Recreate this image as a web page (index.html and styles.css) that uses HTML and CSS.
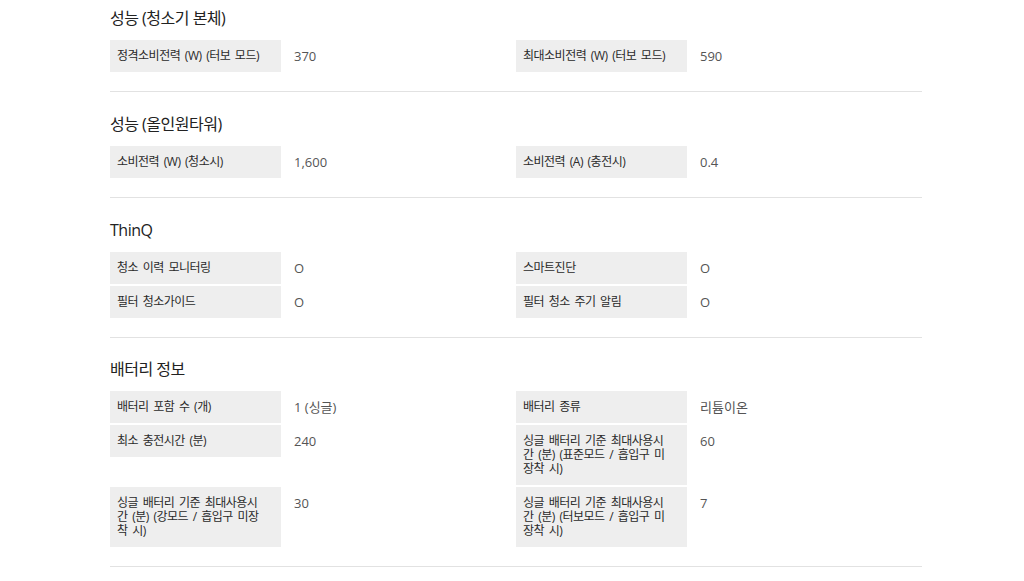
FILE: index.html
```html
<!DOCTYPE html>
<html lang="ko">
<head>
<meta charset="utf-8">
<title>스펙</title>
<link rel="stylesheet" href="styles.css">
</head>
<body>
<div class="specs">
  <section class="spec-group">
    <h3 class="spec-title">성능 (청소기 본체)</h3>
    <div class="spec-grid">
      <div class="spec-item"><div class="spec-label">정격소비전력 (W) (터보 모드)</div><div class="spec-value">370</div></div>
      <div class="spec-item"><div class="spec-label">최대소비전력 (W) (터보 모드)</div><div class="spec-value">590</div></div>
    </div>
  </section>
  <section class="spec-group">
    <h3 class="spec-title">성능 (올인원타워)</h3>
    <div class="spec-grid">
      <div class="spec-item"><div class="spec-label">소비전력 (W) (청소시)</div><div class="spec-value">1,600</div></div>
      <div class="spec-item"><div class="spec-label">소비전력 (A) (충전시)</div><div class="spec-value">0.4</div></div>
    </div>
  </section>
  <section class="spec-group">
    <h3 class="spec-title">ThinQ</h3>
    <div class="spec-grid">
      <div class="spec-item"><div class="spec-label">청소 이력 모니터링</div><div class="spec-value">O</div></div>
      <div class="spec-item"><div class="spec-label">스마트진단</div><div class="spec-value">O</div></div>
      <div class="spec-item"><div class="spec-label">필터 청소가이드</div><div class="spec-value">O</div></div>
      <div class="spec-item"><div class="spec-label">필터 청소 주기 알림</div><div class="spec-value">O</div></div>
    </div>
  </section>
  <section class="spec-group">
    <h3 class="spec-title">배터리 정보</h3>
    <div class="spec-grid">
      <div class="spec-item"><div class="spec-label">배터리 포함 수 (개)</div><div class="spec-value">1 (싱글)</div></div>
      <div class="spec-item"><div class="spec-label">배터리 종류</div><div class="spec-value">리튬이온</div></div>
      <div class="spec-item"><div class="spec-label">최소 충전시간 (분)</div><div class="spec-value">240</div></div>
      <div class="spec-item"><div class="spec-label">싱글 배터리 기준 최대사용시간 (분) (표준모드 / 흡입구 미장착 시)</div><div class="spec-value">60</div></div>
      <div class="spec-item"><div class="spec-label">싱글 배터리 기준 최대사용시간 (분) (강모드 / 흡입구 미장착 시)</div><div class="spec-value">30</div></div>
      <div class="spec-item"><div class="spec-label">싱글 배터리 기준 최대사용시간 (분) (터보모드 / 흡입구 미장착 시)</div><div class="spec-value">7</div></div>
    </div>
  </section>
</div>
</body>
</html>
```

FILE: styles.css
```css
html, body {
  margin: 0;
  padding: 0;
  background: #ffffff;
}

body {
  font-family: "Open Sans", "Noto Sans CJK KR", sans-serif;
  color: #333333;
}

.specs {
  width: 812px;
  margin: 0 0 0 110px;
}

.spec-group {
  padding: 21px 0 19px;
  border-bottom: 1px solid #e2e2e2;
}

.spec-group:first-child {
  padding-top: 7px;
}

.spec-group:last-child {
  padding-top: 20px;
}

.spec-title {
  margin: 0 0 11px;
  font-size: 16px;
  line-height: 22px;
  font-weight: 400;
  letter-spacing: -0.5px;
  color: #222222;
}

.spec-grid {
  display: grid;
  grid-template-columns: 1fr 1fr;
  row-gap: 2px;
  align-items: stretch;
}

.spec-item {
  display: flex;
  align-items: flex-start;
}

.spec-label {
  box-sizing: border-box;
  flex: 0 0 171px;
  width: 171px;
  align-self: stretch;
  padding: 9px 14px 9px 7px;
  background: #eeeeee;
  font-size: 12px;
  line-height: 14px;
  letter-spacing: -0.5px;
  word-spacing: 2px;
  color: #2a2a2a;
}

.spec-item:nth-child(odd) .spec-label {
  align-self: flex-start;
}

.spec-value {
  padding: 9px 0 9px 13px;
  font-size: 13px;
  line-height: 14px;
  color: #555555;
}
```
